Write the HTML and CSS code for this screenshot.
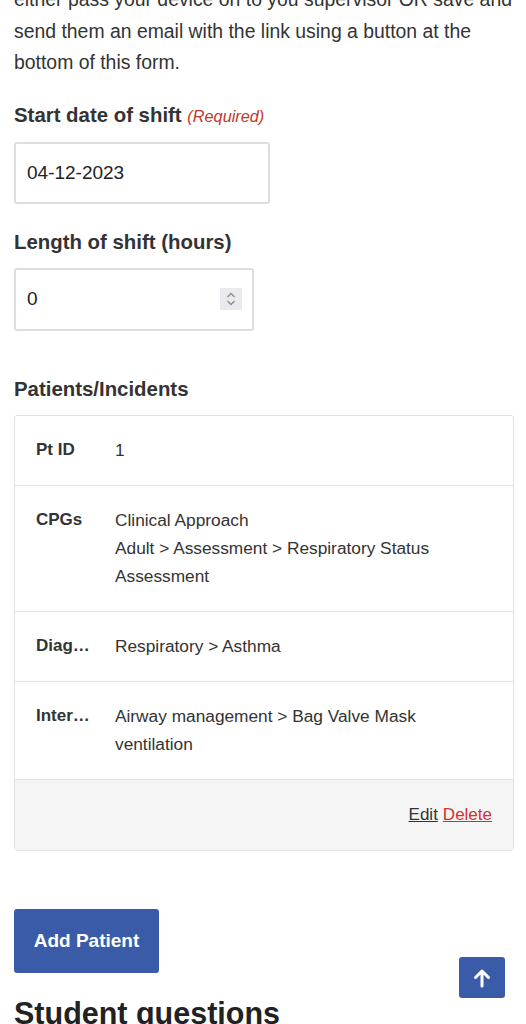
FILE: index.html
```html
<!DOCTYPE html>
<html lang="en">
<head>
<meta charset="utf-8">
<title>Shift form</title>
<link rel="stylesheet" href="styles.css">
</head>
<body>
<div class="fade"></div>
<main class="page">
  <p class="intro">either pass your device on to you supervisor OR save and send them an email with the link using a button at the bottom of this form.</p>

  <div class="field">
    <label class="label">Start date of shift <span class="req">(Required)</span></label>
    <div class="input date">04-12-2023</div>
  </div>

  <div class="field">
    <label class="label">Length of shift (hours)</label>
    <div class="input num"><span>0</span>
      <span class="spin"><svg width="12" height="18" viewBox="0 0 12 18"><path d="M2.5 7 L6 3.5 L9.5 7 M2.5 11 L6 14.5 L9.5 11" fill="none" stroke="#8a8a90" stroke-width="1.3"/></svg></span>
    </div>
  </div>

  <h3 class="section">Patients/Incidents</h3>
  <div class="card">
    <div class="row"><div class="k">Pt ID</div><div class="v">1</div></div>
    <div class="row"><div class="k">CPGs</div><div class="v">Clinical Approach<br>Adult &gt; Assessment &gt; Respiratory Status Assessment</div></div>
    <div class="row"><div class="k">Diagnosis</div><div class="v">Respiratory &gt; Asthma</div></div>
    <div class="row"><div class="k">Interventions</div><div class="v">Airway management &gt; Bag Valve Mask ventilation</div></div>
    <div class="foot"><a class="edit" href="#">Edit</a> <a class="del" href="#">Delete</a></div>
  </div>

  <button class="btn">Add Patient</button>

  <h2 class="h2">Student questions</h2>
</main>
<a class="totop" href="#"><svg width="18" height="20" viewBox="0 0 18 20"><path d="M9 18 V3 M2.5 9.5 L9 3 L15.5 9.5" fill="none" stroke="#fff" stroke-width="3" stroke-linecap="round" stroke-linejoin="round"/></svg></a>
</body>
</html>
```
FILE: styles.css
```css
html, body { margin: 0; padding: 0; background: #fff; }
body { font-family: "Liberation Sans", Arial, sans-serif; color: #333; }
.page { padding: 0 12px 0 14px; margin-top: -16px; }
.intro { font-size: 19.4px; line-height: 31.5px; margin: 0 0 24px; }
.field { margin-bottom: 26px; }
.label { display: block; font-weight: bold; font-size: 20.4px; line-height: 24px; margin-bottom: 14px; }
.req { font-weight: normal; font-style: italic; color: #c0392b; font-size: 16.3px; }
.input { box-sizing: border-box; height: 62px; border: 2px solid #ddd; border-radius: 3px; padding: 0 11px; font-size: 19px; display: flex; align-items: center; color: #222; }
.date { width: 256px; }
.num { width: 240px; height: 63px; justify-content: space-between; padding-right: 10px; }
.spin { width: 22px; height: 22px; background: #e9e9ee; display: flex; align-items: center; justify-content: center; }
.section { font-size: 20.4px; font-weight: bold; margin: 46px 0 14px; line-height: 24px; }
.card { border: 1px solid #e2e2e2; border-radius: 3px; }
.row { display: flex; padding: 20.5px 21px; border-bottom: 1px solid #e2e2e2; font-size: 17.3px; line-height: 28px; }
.k { width: 56px; flex: none; font-weight: bold; white-space: nowrap; overflow: hidden; text-overflow: ellipsis; margin-right: 23px; font-size: 17px; }
.v { flex: 1; }
.foot { background: #f5f5f5; height: 70px; display: flex; align-items: center; justify-content: flex-end; padding: 0 21px; font-size: 17px; gap: 5px; }
.edit { color: #333; }
.del { color: #d0312d; }
.btn { margin-top: 58px; display: block; width: 145px; height: 64px; background: #3a5ca8; color: #fff; border: 0; border-radius: 3px; font-family: inherit; font-weight: bold; font-size: 19px; }
.h2 { font-size: 30.5px; margin: 20px 0 0; line-height: 40px; color: #222; }
.fade { position: fixed; z-index: -1; left: 0; right: 0; bottom: 0; height: 26px; background: linear-gradient(to bottom, rgba(245,245,245,0), rgba(240,240,240,0.8)); pointer-events: none; }
.totop { position: fixed; right: 21px; bottom: 26px; width: 46px; height: 41px; background: #3a5ca8; border-radius: 3px; display: flex; align-items: center; justify-content: center; }
```
